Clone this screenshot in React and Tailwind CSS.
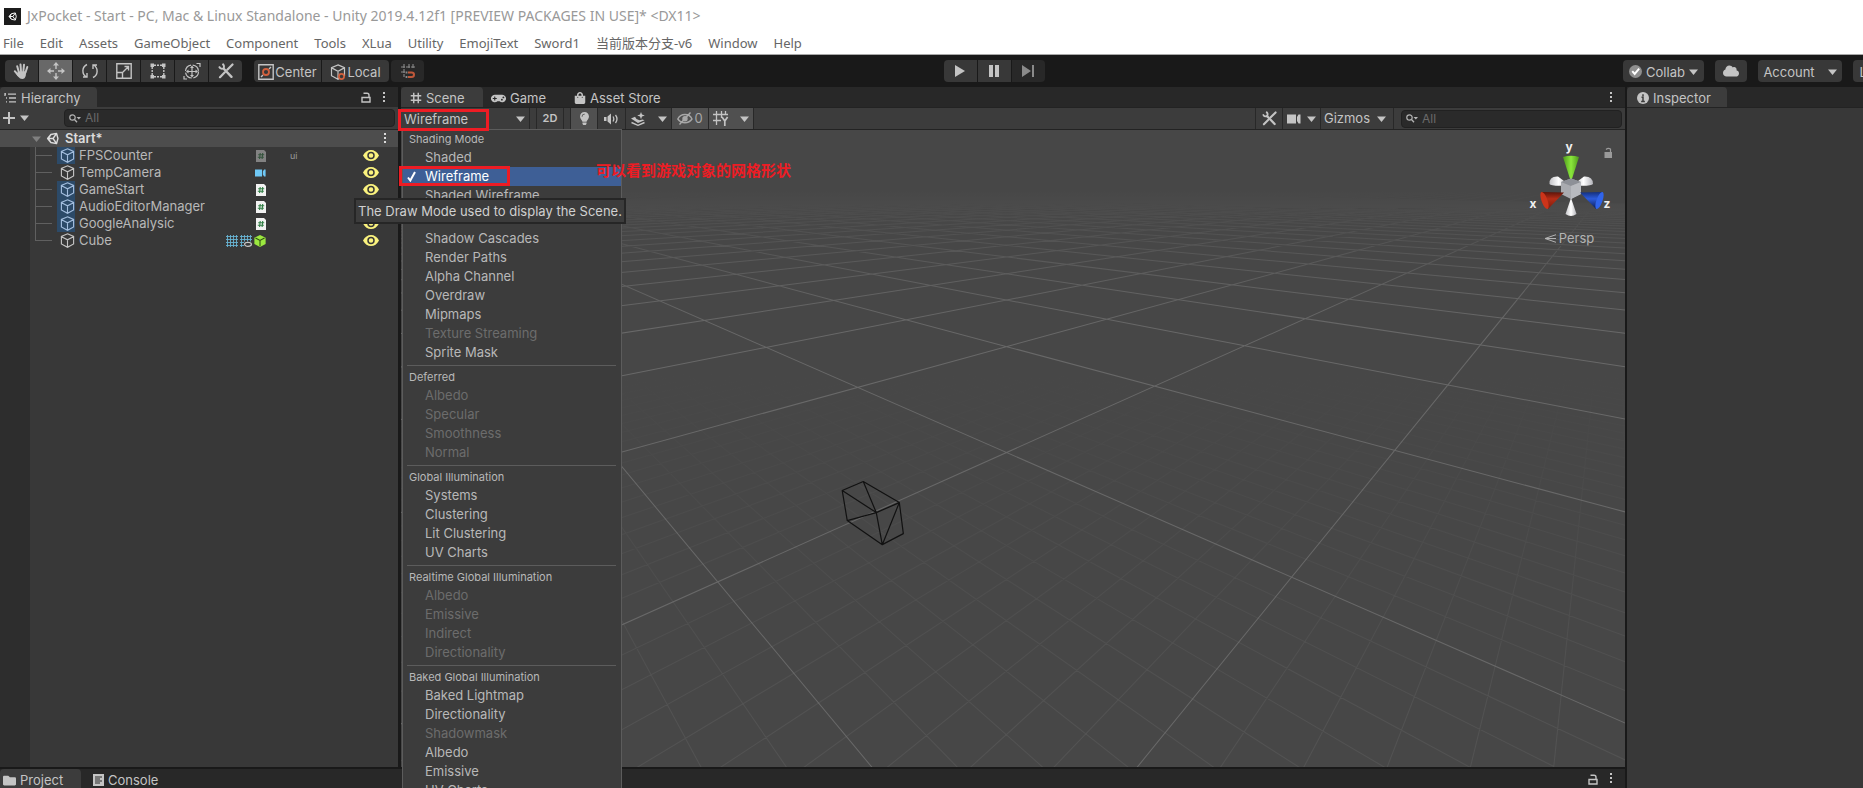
import { useState } from "react";
import { clsx } from "clsx";
import { FaCloud, FaFolder, FaGamepad, FaLightbulb, FaShoppingBag } from "react-icons/fa";

const FONT_UI   = "font-['Inter','Noto_Sans_CJK_SC',sans-serif]";
const FONT_MENU = "font-['Noto_Sans','Noto_Sans_CJK_SC',sans-serif]";

const MENU_BAR = ["File","Edit","Assets","GameObject","Component","Tools","XLua","Utility","EmojiText","Sword1","当前版本分支-v6","Window","Help"];

const OBJECTS = [
  { name: "FPSCounter",         prefab: true,  comps: ["scriptOff"], layer: "ui" },
  { name: "TempCamera",         prefab: false, comps: ["camera"] },
  { name: "GameStart",          prefab: true,  comps: ["script"] },
  { name: "AudioEditorManager", prefab: true,  comps: ["script"] },
  { name: "GoogleAnalysic",     prefab: true,  comps: ["script"] },
  { name: "Cube",               prefab: false, comps: ["mesh","meshEye","cube"] },
];

const DRAW_MODES = [
  { title: "Shading Mode", items: ["Shaded","Wireframe","Shaded Wireframe"] },
  { title: "", items: ["Shadow Cascades","Render Paths","Alpha Channel","Overdraw","Mipmaps","Texture Streaming","Sprite Mask"], off: ["Texture Streaming"] },
  { title: "Deferred", items: ["Albedo","Specular","Smoothness","Normal"], off: ["Albedo","Specular","Smoothness","Normal"] },
  { title: "Global Illumination", items: ["Systems","Clustering","Lit Clustering","UV Charts"] },
  { title: "Realtime Global Illumination", items: ["Albedo","Emissive","Indirect","Directionality"], off: ["Albedo","Emissive","Indirect","Directionality"] },
  { title: "Baked Global Illumination", items: ["Baked Lightmap","Directionality","Shadowmask","Albedo","Emissive","UV Charts"], off: ["Shadowmask"] },
];

/* ── Icons ── */
const Svg = ({ size = 16, w, h, vb, children, className }) => (
  <svg width={w || size} height={h || size} viewBox={vb || "0 0 16 16"} fill="none" stroke="currentColor" strokeWidth="1.4" className={clsx("shrink-0", className)} aria-hidden="true">
    {children}
  </svg>
);
const Caret = ({ className }) => <Svg w={9} h={6} vb="0 0 9 6" className={className}><path d="M0 0.5h9L4.5 6z" fill="currentColor" stroke="none" /></Svg>;
const Dots = () => (
  <Svg w={4} h={13} vb="0 0 4 13"><g fill="currentColor" stroke="none"><rect x="1" y="1" width="2" height="2" /><rect x="1" y="5" width="2" height="2" /><rect x="1" y="9" width="2" height="2" /></g></Svg>
);
const LockIcon = () => <Svg w={10} h={12} vb="0 0 10 12"><path d="M1 6.500h8v4.500h-8zM2.500 2.200h3.500q2 0 2 2v2.300" /></Svg>;
const UnityLogo = ({ size = 13 }) => (
  <Svg size={size} vb="0 0 24 24"><path strokeWidth="2.600" strokeLinejoin="round" d="M3 12L9 4.500L19.500 2.500L22 12L19.500 21.500L9 19.500zM3.500 12h9.500M13 12L19 3.500M13 12l6 8.500M9 5l-5 7l5 7" /></Svg>
);
const HandIcon = () => (
  <Svg size={17} vb="0 0 17 17"><path d="M4.200 3.200L5.800 9M7.500 1.500L8 8.500M11 1.800L10.300 8.500M14.300 4L12.500 9.500M1.800 8.200L5.500 12.500" strokeWidth="2" strokeLinecap="round" /><path d="M5 8.500L13.200 8.200L12.800 12.500Q12 16 9.200 16Q6.800 16 5.500 14L3.500 11.500z" fill="currentColor" stroke="none" /></Svg>
);
const MoveIcon = () => (
  <Svg size={18} vb="0 0 18 18"><path d="M9 3v4M9 11v4M3 9h4M11 9h4" /><path d="M9 0l3 3.500h-6zM9 18l3-3.500h-6zM0 9l3.500-3v6zM18 9l-3.500-3v6z" fill="currentColor" stroke="none" /></Svg>
);
const RotateIcon = () => <Svg size={16}><path d="M5 1.500A7 7 0 0 0 4.500 14M1 14h4v-4M11 14.500A7 7 0 0 0 11.500 2M15 2h-4v4" /></Svg>;
const ScaleIcon = () => <Svg size={16}><path d="M.8.8h14.400v14.400H.8zM1 9.500h5.500v5.500M8.500 3.500h4v4M12.500 3.500L7 9" /></Svg>;
const RectIcon = () => (
  <Svg size={16}><path d="M4 2.200h8M4 13.800h8M2.200 4v8M13.800 4v8" strokeDasharray="2 1" /><g fill="currentColor" stroke="none"><rect x="0.500" y="0.500" width="3.500" height="3.500" /><rect x="12" y="0.500" width="3.500" height="3.500" /><rect x="0.500" y="12" width="3.500" height="3.500" /><rect x="12" y="12" width="3.500" height="3.500" /></g></Svg>
);
const TransformIcon = () => (
  <Svg size={18} vb="0 0 18 18"><circle cx="9" cy="9.500" r="6.500" strokeWidth="1.200" strokeDasharray="8.500 1.700" /><path d="M9 5v9M4.500 9.500h9" strokeWidth="1.200" /><path d="M9 3.500l2 2.500h-4zM9 15.500l2-2.500h-4zM3 9.500l2.500-2v4zM15 9.500l-2.500-2v4z" fill="currentColor" stroke="none" /><path d="M13.500 1.500h3.500v3.500M1 14v3h3" strokeWidth="1.200" /></Svg>
);
const ToolsIcon = ({ size = 16 }) => (
  <Svg size={size}><path d="M5.500 5.500L13.500 13.800" strokeWidth="2.400" strokeLinecap="round" /><path d="M1 3.500q1.500 3.200 4.500 2q1.500-2.700-1-4.700" strokeWidth="1.800" /><path d="M14.500 1.500L9.300 6.700M6.800 9.300L2 14.200" strokeWidth="2.200" strokeLinecap="round" /></Svg>
);
const PivotIcon = () => (
  <Svg size={16}><path d="M.8.8h14.400v14.400H.8z" /><path d="M3 13l2-2M11 5l2-2" /><circle cx="8" cy="8" r="3" stroke="#d1603d" strokeWidth="1.800" /></Svg>
);
const BoxIcon = ({ size = 14, accent }) => (
  <Svg size={size}><path d="M8 .9L14.500 3.700V11.700L8 15.200L1.500 11.700V3.700zM1.700 3.900L8 7.200L14.300 3.900M8 7.200V15" strokeWidth="1.200" />{accent && <circle cx="11.500" cy="12.500" r="2.600" stroke="#d1603d" strokeWidth="1.700" fill="#383838" />}</Svg>
);
const SnapIcon = () => (
  <Svg size={16}><path d="M4 1v13M9 1v5M13 1v5M1 4h14M1 9h5" strokeWidth="1.100" strokeDasharray="4 1" /><path d="M8 9.500h3.500q2.500 0 2.500 2.200t-2.500 2.300H8" stroke="#c0583a" strokeWidth="2" /><path d="M6.500 8.500v2M6.500 13v2" strokeWidth="1.800" /></Svg>
);
const GridIcon = ({ size = 12 }) => <Svg size={size}><path d="M5 1v14M11 1v14M1 5h14M1 11h14" strokeWidth="1.900" /></Svg>;
const ListIcon = () => <Svg w={13} h={10} vb="0 0 13 10"><path d="M1 1h1M4 1.200h8M2 5h1M5 5h7M2 8.800h1M5 8.800h7M1 0v3" strokeWidth="1.300" /></Svg>;
const SearchIcon = () => <Svg w={12} h={9} vb="0 0 12 9"><circle cx="3.500" cy="3.500" r="2.700" strokeWidth="1.200" /><path d="M5.500 5.500L8 8.300" strokeWidth="1.300" /><path d="M7.500 3h4.500l-2.200 2.600z" fill="currentColor" stroke="none" /></Svg>;
const SpeakerIcon = () => <Svg w={15} h={12} vb="0 0 15 12"><path d="M0 4h2.500v4H0zM3.500 3.500L7 .5v11L3.500 8.500z" fill="currentColor" stroke="none" /><path d="M9 3.500q1.600 2.500 0 5M11.500 2q3 4 0 8" strokeWidth="1.300" /></Svg>;
const FxIcon = () => (
  <Svg size={14} vb="0 0 14 14"><path d="M0 6.500l4-1.800l1.500 2.300l3 1.200l3-.8l2 .8L7 11z" fill="currentColor" stroke="none" /><path d="M.5 10.500L7 13.300L13.500 10.500" /><path d="M10 0l1 2.600L13.800 3.600L11 4.600L10 7.300L9 4.600L6.200 3.600L9 2.600z" fill="currentColor" stroke="none" /></Svg>
);
const HiddenIcon = () => <Svg w={16} h={13} vb="0 0 16 13"><path d="M.8 7Q3 2.500 8 2.500T15 7Q12.500 10.800 8 10.800T.8 7zM2.500 12.500L13.500.5" /><circle cx="8" cy="6.800" r="2" fill="currentColor" /></Svg>;
const GridYIcon = () => <Svg w={16} h={15} vb="0 0 16 15"><path d="M3.500 0v14M8.500 0v7M12.500 0v4M0 3.500h15M0 9.500h8" strokeWidth="1.300" /><path d="M9 6l2.800 4L14.600 6M11.800 10v5" strokeWidth="1.700" /></Svg>;
const CameraIcon = ({ w = 14, className }) => <Svg w={w} h={10} vb="0 0 14 10" className={className}><path d="M0 .5h9v9H0zM10 3l1.500-2.500h2v9h-2L10 7z" fill="currentColor" stroke="none" /></Svg>;
const EyeIcon = () => (
  <Svg w={16} h={11} vb="0 0 16 11"><path d="M0 5.500Q3 0 8 0T16 5.500Q13 11 8 11T0 5.500z" fill="#fbf37e" stroke="none" /><circle cx="8" cy="5.500" r="3" stroke="#383838" strokeWidth="1.500" /></Svg>
);
const ScriptIcon = ({ off }) => (
  <Svg w={10} h={12} vb="0 0 10 12" className={off && "opacity-40"}><path d="M0 0h8l2 2v10H0z" fill="#f2f2f2" stroke="none" /><path d="M4.200 3L3.600 9M6.700 3L6.100 9M2.200 4.800h6M1.800 7.200h6" stroke="#2f7d43" strokeWidth="1.100" /></Svg>
);
const MeshIcon = ({ eye }) => (
  <Svg size={12} vb="0 0 12 12" className="text-[#68b3d3]"><path d="M1.500 0v12M4.500 0v12M7.500 0v12M10.500 0v12M0 1.500h12M0 4.500h12M0 7.500h12M0 10.500h12" strokeWidth="0.900" />{eye && <><rect x="4" y="6.500" width="8" height="5.500" fill="#383838" stroke="none" /><ellipse cx="8" cy="9.300" rx="3.400" ry="2" stroke="#c8c8c8" strokeWidth="1.200" /></>}</Svg>
);
const GreenCube = () => <Svg size={12}><path d="M8 0L15.500 3.500V12L8 16L.5 12V3.500z" fill="#9be83f" stroke="none" /><path d="M2 4L8 7.200L14 4M8 7.200V15" stroke="#2f4d14" /></Svg>;

const COMP_ICONS = {
  script:    <ScriptIcon />,
  scriptOff: <ScriptIcon off />,
  camera:    <CameraIcon w={11} className="text-[#6fc8f5]" />,
  mesh:      <MeshIcon />,
  meshEye:   <MeshIcon eye />,
  cube:      <GreenCube />,
};

/* ── Scene floor: two families of lines running to two points on the horizon ── */
const HORIZON = 180, VP_LEFT = 384, VP_RIGHT = 1613, STEP_R = 0.322, STEP_L = 0.314;

const project = (i, j) => {
  const w = 1 + i * STEP_R + j * STEP_L;
  return [(1006 + i * STEP_R * VP_RIGHT + j * STEP_L * VP_LEFT) / w, (452 + (i * STEP_R + j * STEP_L) * HORIZON) / w];
};

const floorPath = (from, to, step, far) => {
  let d = "";
  for (let n = from; n <= to; n++) {
    const k = n * step;
    if (step < 1 && n % 10 === 0) continue;
    const a = project(k, (-0.8 - k * STEP_R) / STEP_L), b = project(k, far);
    const c = project((-0.8 - k * STEP_L) / STEP_R, k), e = project(far, k);
    d += `M${a.map(v => v.toFixed(1))}L${b.map(v => v.toFixed(1))}M${c.map(v => v.toFixed(1))}L${e.map(v => v.toFixed(1))}`;
  }
  return d;
};
const MAJOR = floorPath(-12, 34, 1, 60);
const MINOR = floorPath(-60, 60, 0.1, 12);

function SceneFloor() {
  return (
    <svg className="absolute inset-0 w-full h-full" viewBox="401 130 1223 636" preserveAspectRatio="xMidYMid slice" fill="none" aria-hidden="true">
      <defs>
        <linearGradient id="major" gradientUnits="userSpaceOnUse" x1="0" y1="190" x2="0" y2="330">
          <stop offset="0" stopColor="#767676" stopOpacity="0" /><stop offset="0.300" stopColor="#767676" stopOpacity="0.220" /><stop offset="0.700" stopColor="#767676" stopOpacity="0.550" /><stop offset="1" stopColor="#767676" stopOpacity="0.700" />
        </linearGradient>
        <linearGradient id="minor" gradientUnits="userSpaceOnUse" x1="0" y1="370" x2="0" y2="720">
          <stop offset="0" stopColor="#767676" stopOpacity="0" /><stop offset="0.400" stopColor="#767676" stopOpacity="0.100" /><stop offset="1" stopColor="#767676" stopOpacity="0.240" />
        </linearGradient>
      </defs>
      <path d={MINOR} stroke="url(#minor)" />
      <path d={MAJOR} stroke="url(#major)" />
      <path stroke="#111" strokeWidth="1.200" strokeLinejoin="round" d="M842 490L863 481L899 502L876 512zM863 481L876 512M842 490L847 520L882 544L876 512M847 520L876 512M882 544L903 533L899 502L882 544" />
    </svg>
  );
}

function AxisGizmo() {
  return (
    <div className="absolute top-3 right-3 w-[84px] flex flex-col items-center text-[#b4b4b4]">
      <svg width="84" height="78" viewBox="1528 138 84 78" role="img" aria-label="Scene orientation">
        <defs>
          <linearGradient id="gy"><stop offset="0" stopColor="#4f9a1c" /><stop offset="0.500" stopColor="#8be83c" /><stop offset="1" stopColor="#4f9a1c" /></linearGradient>
          <linearGradient id="gw"><stop offset="0" stopColor="#c4c4c8" /><stop offset="0.500" stopColor="#fff" /><stop offset="1" stopColor="#b4b4ba" /></linearGradient>
          <linearGradient id="gr" x1="0" y1="0" x2="0" y2="1"><stop offset="0" stopColor="#5c140a" /><stop offset="0.400" stopColor="#b52d16" /><stop offset="1" stopColor="#7c1c0d" /></linearGradient>
          <linearGradient id="gb" x1="0" y1="0" x2="0" y2="1"><stop offset="0" stopColor="#14307c" /><stop offset="0.400" stopColor="#2c5bdc" /><stop offset="1" stopColor="#0b1a48" /></linearGradient>
        </defs>
        <path d="M1567 180L1557 172.500Q1548 172 1548.500 180Q1550 182.500 1567 181.500z" fill="url(#gw)" />
        <path d="M1573 180L1583 172.500Q1592 172 1592 180Q1590 182.500 1573 181.500z" fill="url(#gw)" />
        <path d="M1570 178L1562 153Q1570 150.500 1578 153z" fill="url(#gy)" />
        <path d="M1560 178L1570 174.500L1580 178V190L1570 195L1560 190z" fill="#a9abb0" />
        <path d="M1560 178L1570 174.500L1580 178L1570 182z" fill="#8d9097" />
        <path d="M1570 182L1580 178V190L1570 195z" fill="#b8babf" />
        <path d="M1570 194L1564.500 210Q1570 214 1575.500 210z" fill="url(#gw)" />
        <path d="M1563 188.500L1541 188Q1538 190 1547 205z" fill="url(#gr)" />
        <ellipse cx="1543.500" cy="196.500" rx="3" ry="9" transform="rotate(-20 1543.500 196.500)" fill="#cc341a" />
        <path d="M1579 188.500L1601 188Q1604 190 1595 205z" fill="url(#gb)" />
        <ellipse cx="1598.500" cy="196.500" rx="3" ry="9" transform="rotate(20 1598.500 196.500)" fill="#3064ea" />
        <g fill="#f0f0f0" fontFamily="Inter, sans-serif" fontSize="12" fontWeight="700" textAnchor="middle">
          <text x="1568" y="147">y</text><text x="1532" y="204">x</text><text x="1606" y="204">z</text>
        </g>
        <path d="M1603.500 148h7.500v6h-7.500z" fill="#9a9a9a" /><path d="M1605 145.500q2-1.800 4.500-.5v4" stroke="#9a9a9a" strokeWidth="1.200" fill="none" />
      </svg>
      <button className="mt-[10px] pr-1 flex items-center gap-[3px] text-[13px] leading-4">
        <Svg w={12} h={9} vb="0 0 12 9"><path d="M12 .7L1 4.500L12 8.300M1 4.500h11" strokeWidth="1" /></Svg>Persp
      </button>
    </div>
  );
}

function ToolButton({ label, active, dim, className, children }) {
  return (
    <button aria-label={label} className={clsx("h-[22px] flex items-center justify-center shrink-0 leading-6", active ? "bg-[#686868]" : dim ? "bg-[#282828] text-[#8a8a8a]" : "bg-[#383838]", className || "w-[33px]")}>
      {children}
    </button>
  );
}

function MainToolbar() {
  return (
    <div className="h-8 shrink-0 bg-[#191919] grid grid-cols-[15fr_auto_13fr] items-center text-[13px] text-[#c4c4c4]">
      <div className="flex items-center pl-[5px]">
        <div className="flex gap-px rounded-sm overflow-hidden">
          <ToolButton label="Hand"><HandIcon /></ToolButton>
          <ToolButton label="Move" active><MoveIcon /></ToolButton>
          <ToolButton label="Rotate"><RotateIcon /></ToolButton>
          <ToolButton label="Scale"><ScaleIcon /></ToolButton>
          <ToolButton label="Rect"><RectIcon /></ToolButton>
          <ToolButton label="Transform"><TransformIcon /></ToolButton>
          <ToolButton label="Custom tools"><ToolsIcon /></ToolButton>
        </div>
        <div className="flex gap-px ml-3 rounded-sm overflow-hidden">
          <ToolButton className="w-[67px] pt-px gap-px"><PivotIcon />Center</ToolButton>
          <ToolButton className="w-[67px] pt-px gap-px"><BoxIcon size={16} accent />Local</ToolButton>
        </div>
        <ToolButton label="Snap" dim className="w-[33px] ml-[2px] rounded-sm"><SnapIcon /></ToolButton>
      </div>

      <div className="flex gap-px rounded-sm overflow-hidden">
        <ToolButton label="Play"><Svg w={10} h={12} vb="0 0 10 12"><path d="M0 0l10 6l-10 6z" fill="currentColor" stroke="none" /></Svg></ToolButton>
        <ToolButton label="Pause"><Svg w={10} h={12} vb="0 0 10 12"><path d="M0 0h4v12H0zM6 0h4v12H6z" fill="currentColor" stroke="none" /></Svg></ToolButton>
        <ToolButton label="Step" dim><Svg w={12} h={12} vb="0 0 12 12"><path d="M0 0l9 6l-9 6zM10 0h2v12h-2z" fill="currentColor" stroke="none" /></Svg></ToolButton>
      </div>

      <div className="flex justify-end">
        <div className="w-[240px] flex gap-[11px] overflow-hidden">
          <ToolButton className="w-[81px] pt-px gap-1 rounded-sm">
            <Svg size={13}><circle cx="8" cy="8" r="8" fill="#8e8e8e" stroke="none" /><path d="M4 7.500l3 3.500l5.500-6.500" stroke="#fff" strokeWidth="2.400" /></Svg>
            Collab<Caret />
          </ToolButton>
          <ToolButton label="Services" className="w-8 rounded-sm"><FaCloud size={16} /></ToolButton>
          <ToolButton className="w-[84px] pt-px gap-[13px] rounded-sm">Account<Caret /></ToolButton>
          <ToolButton className="w-[84px] pt-px gap-[13px] rounded-sm"><span className="-ml-2">Layers</span><Caret /></ToolButton>
        </div>
      </div>
    </div>
  );
}

function Tab({ active, icon, children, className }) {
  return (
    <button className={clsx("h-5 flex items-center gap-1 pt-[2px] text-[13px] leading-[18px] text-[#c4c4c4]", active && "bg-[#3c3c3c] rounded-t-sm", className)}>
      {icon}{children}
    </button>
  );
}

function SearchBox({ id, className }) {
  return (
    <label htmlFor={id} className={clsx("h-[18px] flex items-center gap-1 pl-1 rounded bg-[#2a2a2a] border border-[#212121] text-[#b4b4b4]", className)}>
      <SearchIcon />
      <input id={id} placeholder="All" aria-label="Search" className="flex-1 min-w-0 bg-transparent text-[12px] leading-4 text-[#c4c4c4] placeholder-[#6a6a6a] focus:outline-none" />
    </label>
  );
}

function Hierarchy() {
  return (
    <section className="w-[400px] shrink-0 flex flex-col bg-[#383838] border-r-2 border-[#191919]">
      <div className="h-5 flex items-center bg-[#282828] text-[#c4c4c4] pr-3">
        <Tab active icon={<ListIcon />} className="w-[97px] pl-1">Hierarchy</Tab>
        <div className="ml-auto flex items-center gap-[11px]"><LockIcon /><Dots /></div>
      </div>
      <div className="h-[23px] flex items-center bg-[#3c3c3c] border-b border-[#232323] text-[#c4c4c4]">
        <button aria-label="Create" className="w-16 pl-[3px] flex items-center gap-[5px]">
          <Svg size={12} vb="0 0 12 12"><path d="M6 0v12M0 6h12" strokeWidth="2" /></Svg><Caret />
        </button>
        <SearchBox id="hierarchy-search" className="flex-1 mr-[3px]" />
      </div>

      <div className="h-[17px] flex items-center bg-[#4d4d4d] text-[#dcdcdc] text-[13px] font-semibold pl-8 pr-[11px]">
        <Caret className="text-[#808080]" /><span className="ml-[5px] mr-[6px]"><UnityLogo /></span>Start*
        <span className="ml-auto"><Dots /></span>
      </div>
      <div className="flex-1 flex">
        <div className="w-[30px] bg-[#2d2d2d]" />
        <ul className="flex-1 text-[13px] leading-[17px] text-[#b8b8b8]">
          {OBJECTS.map((o, i) => (
            <li key={o.name} className="h-[17px] flex items-center pl-[5px] pr-[19px]">
              <span className={clsx("w-px bg-[#606060] shrink-0", i === OBJECTS.length - 1 ? "h-[9px] self-start" : "h-full")} />
              <span className="w-4 h-px bg-[#606060] shrink-0" />
              <span className={clsx("w-[18px] h-[17px] ml-[5px] mr-1 pl-[3px] flex items-center shrink-0", o.prefab ? "bg-[#2c4a68] text-[#a4bede]" : "text-[#c4c4c4]")}><BoxIcon size={15} /></span>
              <span className="w-[142px] shrink-0">{o.name}</span>
              <span className="w-[45px] flex justify-end items-center gap-[2px] shrink-0">{o.comps.map(c => <span key={c}>{COMP_ICONS[c]}</span>)}</span>
              {o.layer && <span className="ml-6 text-[9px] text-[#9a9a9a]">{o.layer}</span>}
              <button aria-label={`Visibility of ${o.name}`} className="ml-auto"><EyeIcon /></button>
            </li>
          ))}
        </ul>
      </div>
    </section>
  );
}

function DrawModeMenu({ value, onPick }) {
  return (
    <div role="menu" className="absolute z-20 top-full left-px w-[220px] pt-[2px] bg-[#3c3c3c] border border-[#5c5c5c] text-[#b8b8b8]">
      {DRAW_MODES.map((s, n) => (
        <div key={n}>
          {n > 0 && <hr className="mt-[3px] mb-1 ml-1 mr-[5px] border-[#5c5c5c]" />}
          <p className="h-4 pl-[6px] text-[11px] leading-[14px]">{s.title}</p>
          {s.items.map(it => {
            const on = n === 0 && it === value;
            return (
              <button
                key={it}
                role="menuitem"
                disabled={s.off?.includes(it)}
                onClick={() => onPick(it)}
                className={clsx("w-full h-[19px] flex items-center text-[13px] leading-[19px] disabled:text-[#6c6c6c]", on && "bg-[#3e5f96] text-white")}
              >
                <span className="w-[22px] pl-[4px] text-left">
                  {on && <Svg w={9} h={11} vb="0 0 9 11"><path d="M1 6.500L3.300 9.500L8 1" strokeWidth="2" /></Svg>}
                </span>
                {it}
              </button>
            );
          })}
        </div>
      ))}
    </div>
  );
}

function SceneView() {
  const [mode, setMode] = useState("Wireframe");
  const item = "h-full flex items-center justify-center border-r border-[#282828]";

  return (
    <section className="flex-1 min-w-0 flex flex-col pl-px">
      <div className="h-5 flex items-center bg-[#282828] text-[#c4c4c4] pr-3">
        <Tab active icon={<GridIcon />} className="w-[82px] pl-[9px]">Scene</Tab>
        <Tab icon={<FaGamepad size={15} />} className="w-[82px] pl-2">Game</Tab>
        <Tab icon={<FaShoppingBag size={12} />} className="pl-[9px]">Asset Store</Tab>
        <span className="ml-auto"><Dots /></span>
      </div>

      <div className="h-[23px] flex items-center bg-[#3c3c3c] border-y border-[#232323] text-[#c4c4c4] text-[13px]">
        <div className={clsx(item, "relative w-[129px]")}>
          <select aria-label="Draw Mode" value={mode} onChange={e => setMode(e.target.value)} className="w-full h-full pl-[3px] appearance-none bg-transparent leading-5 focus:outline-none">
            {DRAW_MODES[0].items.map(m => <option key={m}>{m}</option>)}
          </select>
          <Caret className="absolute right-1 pointer-events-none" />
          <DrawModeMenu value={mode} onPick={setMode} />
          <p role="tooltip" className="absolute z-30 top-[90px] -left-[47px] h-[26px] px-[2px] bg-[#3c3c3c] border-2 border-[#262626] whitespace-nowrap text-[13px] leading-[22px] text-[#d0d0d0]">The Draw Mode used to display the Scene.</p>
          {/* notes drawn over the view */}
          <span className="absolute z-40 top-px -left-[3px] w-[91px] h-[22px] border-3 border-[#ed1c24]" />
          <span className="absolute z-40 top-[58px] -left-[2px] w-[111px] h-5 border-3 border-[#ed1c24]" />
          <span className="absolute z-40 top-[50px] left-[195px] whitespace-nowrap font-['Noto_Sans_CJK_SC',sans-serif] font-bold text-[15px] leading-6 text-[#ed1c24]">可以看到游戏对象的网格形状</span>
        </div>
        <button className={clsx(item, "ml-[6px] w-7 text-[11px] font-semibold border-l")}>2D</button>
        <button aria-label="Scene lighting" className={clsx(item, "ml-[6px] w-7 bg-[#505050] border-l")}><FaLightbulb size={13} /></button>
        <button aria-label="Scene audio" className={clsx(item, "w-7")}><SpeakerIcon /></button>
        <button aria-label="Effects" className={clsx(item, "w-[46px] gap-[13px]")}><FxIcon /><Caret /></button>
        <button className={clsx(item, "w-[37px] gap-px bg-[#505050] text-[#a8a8a8]")}><HiddenIcon />0</button>
        <button aria-label="Grid" className={clsx(item, "w-[45px] gap-[11px] bg-[#505050]")}><GridYIcon /><Caret /></button>

        <button aria-label="Component tools" className={clsx(item, "ml-auto w-7 border-l")}><ToolsIcon size={15} /></button>
        <button aria-label="Camera" className={clsx(item, "w-[38px] gap-[6px]")}><CameraIcon /><Caret /></button>
        <button className={clsx(item, "w-[73px] gap-[7px] pr-1")}>Gizmos<Caret /></button>
        <SearchBox id="scene-search" className="w-[221px] ml-[7px] mr-[3px]" />
      </div>

      <div className="flex-1 relative overflow-hidden bg-[#474747]">
        <SceneFloor />
        <AxisGizmo />
      </div>
    </section>
  );
}

export default function App() {
  return (
    <div className={clsx("h-screen overflow-hidden flex flex-col bg-[#191919] select-none", FONT_UI)}>
      <header className={clsx("shrink-0 bg-white border-b border-[#a8a8a8]", FONT_MENU)}>
        <h1 className="h-8 flex items-center gap-[6px] pl-1 text-[14px] leading-8 text-[#999]">
          <span className="w-[17px] h-[17px] bg-[#1c1c1c] text-white flex items-center justify-center"><UnityLogo size={9} /></span>
          JxPocket - Start - PC, Mac &amp; Linux Standalone - Unity 2019.4.12f1 [PREVIEW PACKAGES IN USE]* &lt;DX11&gt;
        </h1>
        <nav className="h-[22px] flex items-start gap-4 pl-[3px] text-[13px] leading-[22px] text-[#666]">
          {MENU_BAR.map(m => <button key={m}>{m}</button>)}
        </nav>
      </header>

      <MainToolbar />

      <div className="flex-1 min-h-0 flex">
        <div className="flex-1 min-w-0 flex flex-col">
          <div className="flex-1 min-h-0 flex"><Hierarchy /><SceneView /></div>
          <section className="h-[21px] shrink-0 border-t-2 border-[#191919] bg-[#282828] flex items-start text-[#c4c4c4] pr-3">
            <Tab active icon={<FaFolder size={13} />} className="w-[81px] pl-[3px]">Project</Tab>
            <Tab icon={<Svg w={11} h={12} vb="0 0 11 12"><path d="M0 0h11v12H0z" fill="currentColor" stroke="none" /><path d="M2 3h7M2 5h5M2 7h7M2 9h5" stroke="#282828" strokeWidth="1" /></Svg>} className="pl-3">Console</Tab>
            <div className="ml-auto h-full flex items-center gap-[11px]"><LockIcon /><Dots /></div>
          </section>
        </div>
        <aside className="w-[238px] shrink-0 flex flex-col bg-[#383838] border-l-2 border-[#191919]">
          <div className="bg-[#282828] border-b border-[#232323]">
            <Tab active icon={<Svg size={12}><circle cx="8" cy="8" r="8" fill="currentColor" stroke="none" /><path d="M8 3v2.500M6 7h2v5M5.500 12.500h5" stroke="#3c3c3c" strokeWidth="2" /></Svg>} className="w-[100px] pl-[10px]">Inspector</Tab>
          </div>
        </aside>
      </div>
    </div>
  );
}
